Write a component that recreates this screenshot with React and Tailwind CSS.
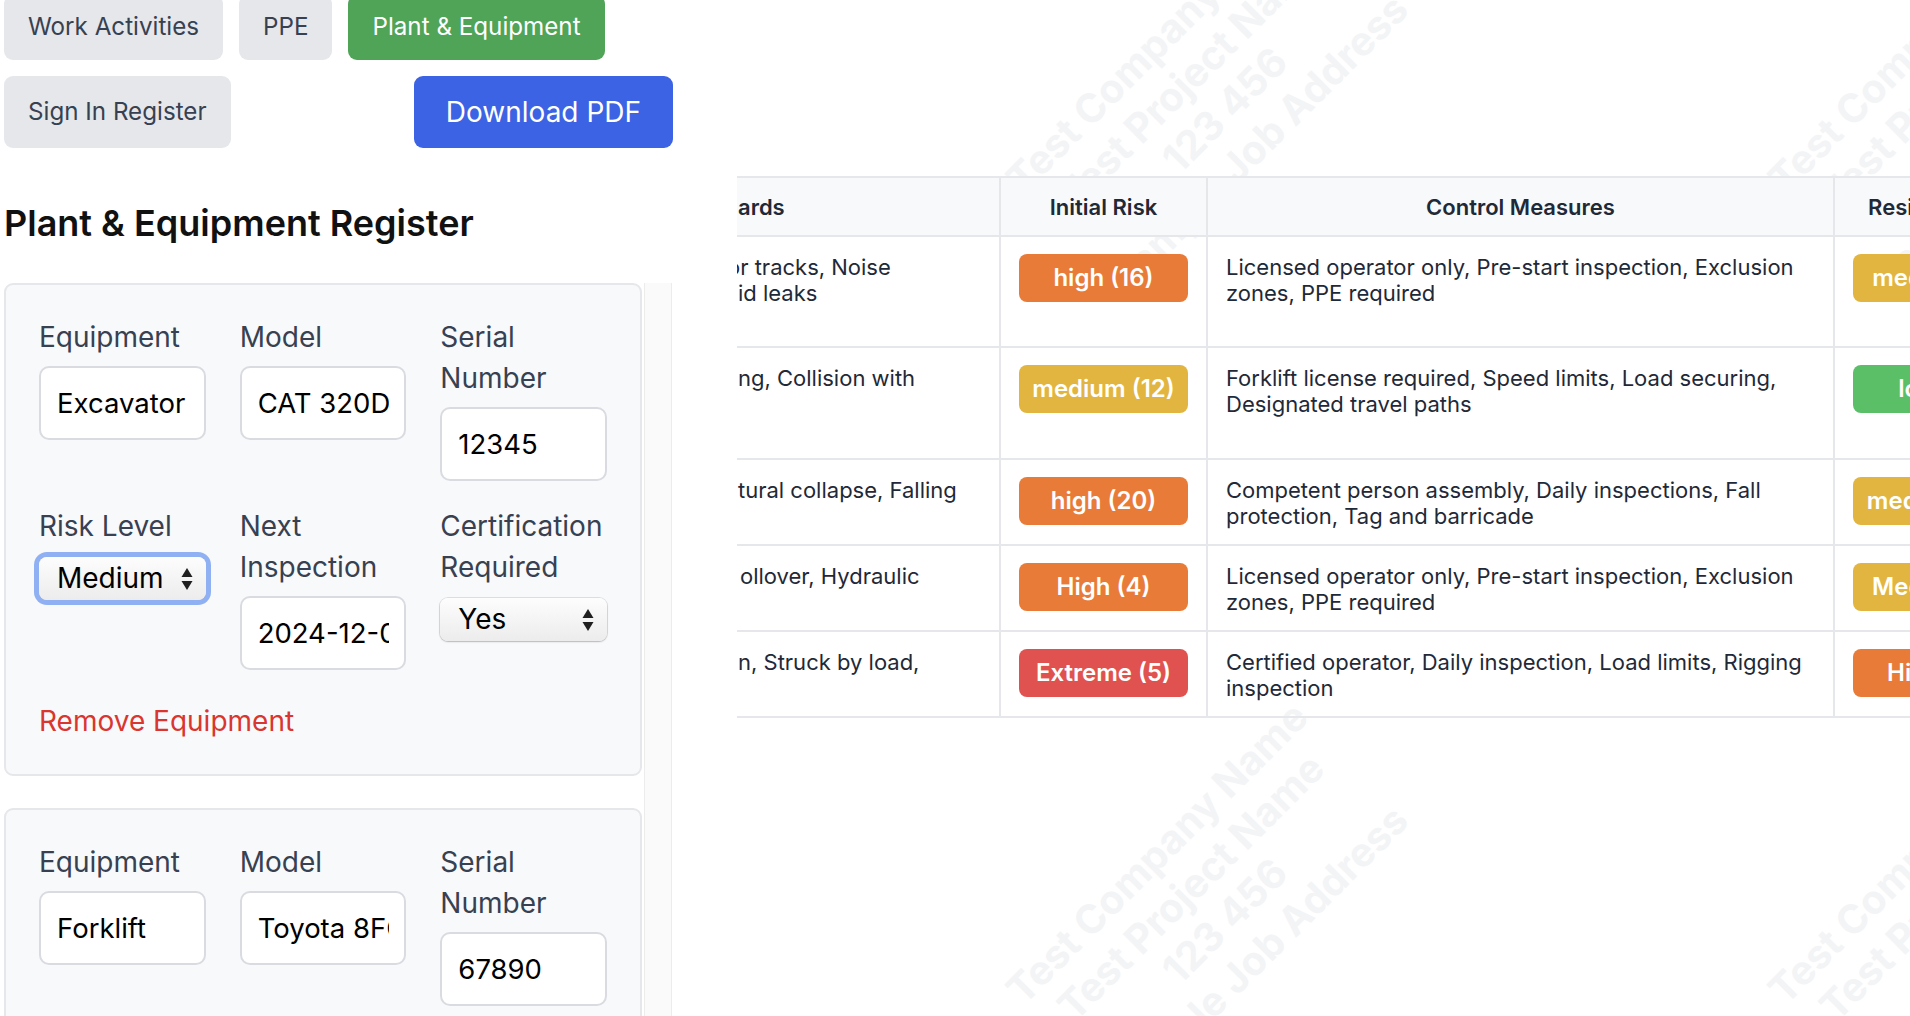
import React from 'react';

const tabs = [
  { label: 'Work Activities', active: false, height: 'h-[65px]' },
  { label: 'PPE', active: false, height: 'h-[65px]' },
  { label: 'Plant & Equipment', active: true, height: 'h-[65px]' },
  { label: 'Sign In Register', active: false, height: 'h-[72px]' },
];

const equipment = [
  { name: 'Excavator', model: 'CAT 320D', serial: '12345', risk: 'Medium', next: '2024-12-01', cert: 'Yes', focused: true },
  { name: 'Forklift', model: 'Toyota 8FGU25', serial: '67890', risk: 'Low', next: '2024-11-15', cert: 'Yes', focused: false },
];

const badgeColors = {
  high: 'bg-[#e87b38]',
  medium: 'bg-[#e2b541]',
  extreme: 'bg-[#e0524f]',
  low: 'bg-[#5bbf68]',
};

const rows = [
  {
    height: 'h-[111px]',
    hazards: [
      { text: 'or tracks, Noise', offset: 'ml-[-10px]' },
      { text: 'id leaks', offset: 'ml-[1px]' },
    ],
    initial: { label: 'high (16)', tone: 'high' },
    control: ['Licensed operator only, Pre-start inspection, Exclusion', 'zones, PPE required'],
    residual: { label: 'medium (8)', tone: 'medium' },
  },
  {
    height: 'h-[112px]',
    hazards: [{ text: 'ng, Collision with', offset: 'ml-[1px]' }],
    initial: { label: 'medium (12)', tone: 'medium' },
    control: ['Forklift license required, Speed limits, Load securing,', 'Designated travel paths'],
    residual: { label: 'low (4)', tone: 'low' },
  },
  {
    height: 'h-[86px]',
    hazards: [{ text: 'tural collapse, Falling', offset: 'ml-[1px]' }],
    initial: { label: 'high (20)', tone: 'high' },
    control: ['Competent person assembly, Daily inspections, Fall', 'protection, Tag and barricade'],
    residual: { label: 'medium (10)', tone: 'medium' },
  },
  {
    height: 'h-[86px]',
    hazards: [{ text: 'ollover, Hydraulic', offset: 'ml-[3px]' }],
    initial: { label: 'High (4)', tone: 'high' },
    control: ['Licensed operator only, Pre-start inspection, Exclusion', 'zones, PPE required'],
    residual: { label: 'Medium (2)', tone: 'medium' },
  },
  {
    height: 'h-[86px]',
    hazards: [{ text: 'n, Struck by load,', offset: 'ml-[1px]' }],
    initial: { label: 'Extreme (5)', tone: 'extreme' },
    control: ['Certified operator, Daily inspection, Load limits, Rigging', 'inspection'],
    residual: { label: 'High (12)', tone: 'high' },
  },
];

const SelectArrows = () => (
  <svg aria-hidden className="pointer-events-none absolute right-[13px] top-1/2 h-[24px] w-[12px] -translate-y-1/2" viewBox="0 0 12 24">
    <path d="M6 1 11.5 10H.5Z" fill="#1f1f1f" />
    <path d="M.5 14h11L6 23Z" fill="#1f1f1f" />
  </svg>
);

const NativeSelect = ({ value, focused }) => (
  <div
    className={`relative mt-[10px] h-[43px] w-full rounded-[8px] bg-[linear-gradient(#fdfdfd,#ececec)] shadow-[0_0_0_1px_rgba(0,0,0,0.10),0_1px_2px_rgba(0,0,0,0.18)] ${
      focused ? 'ring-[5px] ring-[#8fb0f3]' : ''
    }`}
  >
    <select
      defaultValue={value}
      className="h-full w-full appearance-none bg-transparent pl-[18px] text-[28px] leading-[43px] text-black outline-none"
    >
      <option>Low</option>
      <option>Medium</option>
      <option>High</option>
      <option>Yes</option>
      <option>No</option>
    </select>
    <SelectArrows />
  </div>
);

const Field = ({ label, children }) => (
  <div>
    <label className="block text-[28px] leading-[41px] text-[#374151]">{label}</label>
    {children}
  </div>
);

const TextInput = ({ value }) => (
  <input
    type="text"
    defaultValue={value}
    className="mt-[8px] h-[74px] w-full rounded-[10px] border-2 border-[#d9dbe0] bg-white pl-[16px] pr-[15px] text-[27.5px] text-black outline-none"
  />
);

const EquipmentCard = ({ item }) => (
  <div className="rounded-[9px] border-2 border-[#e6e7ea] bg-[#f8f9fa] px-[33px] pb-[32px] pt-[32px]">
    <div className="grid grid-cols-3 gap-x-[34px] gap-y-[25px]">
      <Field label="Equipment">
        <TextInput value={item.name} />
      </Field>
      <Field label="Model">
        <TextInput value={item.model} />
      </Field>
      <Field label="Serial Number">
        <TextInput value={item.serial} />
      </Field>
      <Field label="Risk Level">
        <NativeSelect value={item.risk} focused={item.focused} />
      </Field>
      <Field label="Next Inspection">
        <TextInput value={item.next} />
      </Field>
      <Field label="Certification Required">
        <NativeSelect value={item.cert} />
      </Field>
    </div>
    <button className="mt-[31px] block text-[28px] leading-[41px] text-[#d9362f]">Remove Equipment</button>
  </div>
);

const Badge = ({ label, tone }) => (
  <div className={`flex h-[48px] w-full items-center justify-center rounded-[8px] text-[24px] font-semibold text-white ${badgeColors[tone]}`}>
    {label}
  </div>
);

const Watermark = ({ className }) => (
  <div
    className={`pointer-events-none absolute -translate-x-1/2 -translate-y-1/2 -rotate-45 whitespace-nowrap text-center text-[40px] font-bold leading-[48px] text-[#f3f4f6] ${className}`}
  >
    <div>Test Company Name</div>
    <div>Test Project Name</div>
    <div>123 456</div>
    <div>Sample Job Address</div>
  </div>
);

const cellBase = 'border-b-2 border-[#e5e7eb] px-[18px] pt-[17px] align-top';

export default function App() {
  return (
    <div className="flex h-[1016px] w-[1910px] overflow-hidden bg-white font-[Inter,sans-serif]">
      {/* editor column */}
      <div className="w-[673px] shrink-0 pl-[4px]">
        <div className="-mt-[5px] flex flex-wrap items-start gap-x-[16px] gap-y-[16px]">
          {tabs.map((tab) => (
            <button
              key={tab.label}
              className={`flex items-center rounded-[9px] px-[24px] text-[24.2px] ${tab.height} ${
                tab.active ? 'bg-[#4fa457] text-white' : 'bg-[#e5e7eb] text-[#374151]'
              }`}
            >
              {tab.label}
            </button>
          ))}
          <button className="ml-auto flex h-[72px] items-center rounded-[9px] bg-[#3b63e3] px-[32px] text-[28px] text-white">
            Download PDF
          </button>
        </div>

        <h2 className="mt-[55px] text-[36px] font-semibold leading-[41px] text-[#111]">Plant &amp; Equipment Register</h2>

        <div className="mt-[39px] flex">
          <div className="w-[638px] space-y-[32px]">
            {equipment.map((item) => (
              <EquipmentCard key={item.serial} item={item} />
            ))}
          </div>
          <div className="ml-[2px] h-[760px] w-[28px] border-x border-[#ececec] bg-[#fafafa]" />
        </div>
      </div>

      {/* preview column */}
      <div className="relative ml-[64px] h-[1016px] flex-1 overflow-hidden pt-[176px]">
        <Watermark className="left-[471px] top-[93px]" />
        <Watermark className="left-[471px] top-[904px]" />
        <Watermark className="left-[1233px] top-[93px]" />
        <Watermark className="left-[1233px] top-[904px]" />

        <table className="relative w-[1305px] table-fixed border-separate border-spacing-0 text-[22px] leading-[26px] text-[#1f2937]">
          <colgroup>
            <col className="w-[264px]" />
            <col className="w-[207px]" />
            <col className="w-[627px]" />
            <col className="w-[207px]" />
          </colgroup>
          <thead>
            <tr className="h-[61px] bg-[#f8f9fa]">
              <th className="overflow-hidden whitespace-nowrap border-y-2 border-r-2 border-[#e5e7eb] text-left font-semibold">
                <span className="ml-[1px]">ards</span>
              </th>
              <th className="border-y-2 border-r-2 border-[#e5e7eb] font-semibold">Initial Risk</th>
              <th className="border-y-2 border-r-2 border-[#e5e7eb] font-semibold">Control Measures</th>
              <th className="whitespace-nowrap border-y-2 border-[#e5e7eb] font-semibold">Residual Risk</th>
            </tr>
          </thead>
          <tbody>
            {rows.map((row, i) => (
              <tr key={i} className={row.height}>
                <td className="overflow-hidden whitespace-nowrap border-b-2 border-r-2 border-[#e5e7eb] pt-[17px] align-top">
                  {row.hazards.map((line) => (
                    <div key={line.text} className={line.offset}>
                      {line.text}
                    </div>
                  ))}
                </td>
                <td className={`${cellBase} border-r-2`}>
                  <Badge {...row.initial} />
                </td>
                <td className={`${cellBase} border-r-2`}>
                  {row.control[0]}
                  <br />
                  {row.control[1]}
                </td>
                <td className={cellBase}>
                  <Badge {...row.residual} />
                </td>
              </tr>
            ))}
          </tbody>
        </table>
      </div>
    </div>
  );
}
